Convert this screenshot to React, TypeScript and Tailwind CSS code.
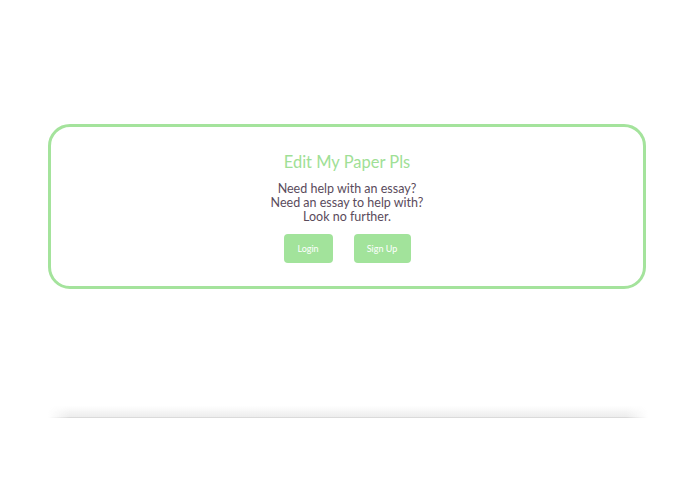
import React from "react";

export default function App() {
  return (
    <div className="w-[695px] h-[494px] bg-white relative overflow-hidden" style={{ fontFamily: "Lato, 'Noto Sans', sans-serif" }}>
      <div className="pt-[124px] pl-[48px]">
        <div className="w-[598px] h-[165px] border-[3px] border-[#a4e39c] rounded-[22px] flex flex-col items-center">
          <h1 className="mt-[23px] text-[16.5px] leading-[24px] text-[#9fe096]">Edit My Paper Pls</h1>
          <div className="mt-[8px] text-[12.5px] leading-[14px] text-[#5a4b5c] text-center">
            <p>Need help with an essay?</p>
            <p>Need an essay to help with?</p>
            <p>Look no further.</p>
          </div>
          <div className="mt-[10px] flex gap-[21px]">
            <button className="w-[49px] h-[29px] rounded-[4px] bg-[#a2e39b] text-white text-[9px]">Login</button>
            <button className="w-[57px] h-[29px] rounded-[4px] bg-[#a2e39b] text-white text-[9px]">Sign Up</button>
          </div>
        </div>
      </div>
      <div className="absolute left-0 top-[417px] w-[695px] flex justify-center">
        <div className="w-[600px] h-[12px] bg-gradient-to-b from-transparent to-[#ececec] border-b border-[#dadada] [mask-image:linear-gradient(to_right,transparent,black_22px,black_calc(100%-22px),transparent)] -translate-y-[11px]" />
      </div>
    </div>
  );
}
